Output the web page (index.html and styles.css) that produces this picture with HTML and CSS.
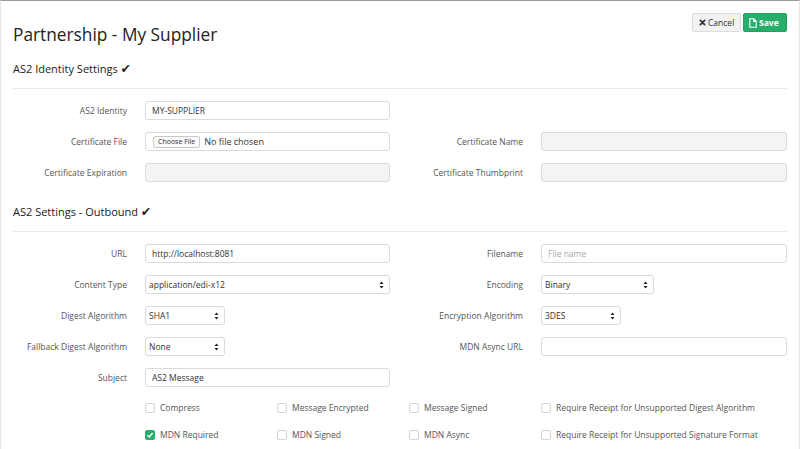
FILE: index.html
```html
<!DOCTYPE html>
<html>
<head>
<meta charset="utf-8">
<title>Partnership - My Supplier</title>
<link rel="stylesheet" href="styles.css">
</head>
<body>
<div class="page">
  <header class="header">
    <h1 class="title">Partnership - My Supplier</h1>
    <div class="actions">
      <button class="btn btn-cancel"><svg class="ico" width="7" height="7" viewBox="0 0 10 10"><path d="M2 2 L8 8 M8 2 L2 8" stroke="#333" stroke-width="2.6" stroke-linecap="round"/></svg>Cancel</button>
      <button class="btn btn-save"><svg class="ico" width="8" height="10" viewBox="0 0 8 10"><path d="M0.8 0.8 H4.8 L7.2 3.2 V9.2 H0.8 Z M4.6 0.8 V3.4 H7.2" fill="none" stroke="#fff" stroke-width="1.1" stroke-linejoin="round"/></svg>Save</button>
    </div>
  </header>

  <h2 class="section-title">AS2 Identity Settings <span class="check">✔</span></h2>
  <hr class="rule">
  <div class="form-grid">
    <label class="lbl">AS2 Identity</label>
    <div class="field"><input class="ctl" type="text" value="MY-SUPPLIER"></div>
    <div></div><div></div>

    <label class="lbl">Certificate File</label>
    <div class="field"><div class="ctl file"><span class="file-btn">Choose File</span><span>No file chosen</span></div></div>
    <label class="lbl">Certificate Name</label>
    <div class="field"><input class="ctl disabled" type="text" disabled></div>

    <label class="lbl">Certificate Expiration</label>
    <div class="field"><input class="ctl disabled" type="text" disabled></div>
    <label class="lbl">Certificate Thumbprint</label>
    <div class="field"><input class="ctl disabled" type="text" disabled></div>
  </div>

  <h2 class="section-title second">AS2 Settings - Outbound <span class="check">✔</span></h2>
  <hr class="rule">
  <div class="form-grid">
    <label class="lbl">URL</label>
    <div class="field"><input class="ctl" type="text" value="http://localhost:8081"></div>
    <label class="lbl">Filename</label>
    <div class="field"><input class="ctl" type="text" placeholder="File name"></div>

    <label class="lbl">Content Type</label>
    <div class="field"><div class="ctl select w-full">application/edi-x12<svg class="arrows" width="5" height="8" viewBox="0 0 5 8"><path d="M2.5 0.5 L4.5 3 H0.5 Z M2.5 7.5 L4.5 5 H0.5 Z" fill="#222"/></svg></div></div>
    <label class="lbl">Encoding</label>
    <div class="field"><div class="ctl select w-enc">Binary<svg class="arrows" width="5" height="8" viewBox="0 0 5 8"><path d="M2.5 0.5 L4.5 3 H0.5 Z M2.5 7.5 L4.5 5 H0.5 Z" fill="#222"/></svg></div></div>

    <label class="lbl">Digest Algorithm</label>
    <div class="field"><div class="ctl select w-sm">SHA1<svg class="arrows" width="5" height="8" viewBox="0 0 5 8"><path d="M2.5 0.5 L4.5 3 H0.5 Z M2.5 7.5 L4.5 5 H0.5 Z" fill="#222"/></svg></div></div>
    <label class="lbl">Encryption Algorithm</label>
    <div class="field"><div class="ctl select w-sm">3DES<svg class="arrows" width="5" height="8" viewBox="0 0 5 8"><path d="M2.5 0.5 L4.5 3 H0.5 Z M2.5 7.5 L4.5 5 H0.5 Z" fill="#222"/></svg></div></div>

    <label class="lbl">Fallback Digest Algorithm</label>
    <div class="field"><div class="ctl select w-sm">None<svg class="arrows" width="5" height="8" viewBox="0 0 5 8"><path d="M2.5 0.5 L4.5 3 H0.5 Z M2.5 7.5 L4.5 5 H0.5 Z" fill="#222"/></svg></div></div>
    <label class="lbl">MDN Async URL</label>
    <div class="field"><input class="ctl" type="text"></div>

    <label class="lbl">Subject</label>
    <div class="field"><input class="ctl" type="text" value="AS2 Message"></div>
    <div></div><div></div>
  </div>

  <div class="checks">
    <div class="chk"><span class="box"></span>Compress</div>
    <div class="chk"><span class="box"></span>Message Encrypted</div>
    <div class="chk"><span class="box"></span>Message Signed</div>
    <div class="chk"><span class="box"></span>Require Receipt for Unsupported Digest Algorithm</div>
    <div class="chk"><span class="box on"><svg width="8" height="8" viewBox="0 0 8 8"><path d="M1.5 4.2 L3.3 6 L6.6 2" fill="none" stroke="#fff" stroke-width="1.5"/></svg></span>MDN Required</div>
    <div class="chk"><span class="box"></span>MDN Signed</div>
    <div class="chk"><span class="box"></span>MDN Async</div>
    <div class="chk"><span class="box"></span>Require Receipt for Unsupported Signature Format</div>
  </div>
</div>
</body>
</html>
```
FILE: styles.css
```css
* { box-sizing: border-box; }
html, body { margin: 0; padding: 0; background: #fff; }
body {
  font-family: "Open Sans", "Liberation Sans", sans-serif;
  color: #333;
  height: 449px;
  overflow: hidden;
  border-top: 1px solid #9a9a9a;
  border-left: 1px solid #e6e6e6;
  border-right: 1px solid #e6e6e6;
}
.page { padding: 12px 12px 0 12px; }
.header { display: flex; justify-content: space-between; align-items: flex-start; }
.title {
  margin: 10px 0 0 0;
  font-size: 17.3px;
  line-height: 23px;
  font-weight: 400;
  color: #222;
}
.actions { display: flex; gap: 2px; }
.btn {
  height: 19px;
  font-family: "Open Sans", "Liberation Sans", sans-serif;
  font-size: 8.5px;
  border-radius: 2px;
  padding: 0 6px;
  display: flex;
  align-items: center;
  gap: 2px;
  cursor: pointer;
}
.btn-cancel { width: 49px; background: #f2f2f2; border: 1px solid #dcdcdc; color: #333; }
.btn-save { width: 44px; background: #28ae6b; border: 1px solid #23a062; color: #fff; font-weight: 700; padding-left: 5px; }
.ico { flex: none; }
.section-title {
  margin: 15px 0 0 0;
  font-size: 11px;
  line-height: 16px;
  font-weight: 400;
  color: #222;
}
.section-title.second { margin-top: 22px; }
.check { font-family: "DejaVu Sans", sans-serif; font-size: 12.5px; line-height: 1; }
.rule { margin: 11px 0 0 0; border: 0; border-top: 1px solid #e8e8e8; height: 0; }
.form-grid {
  margin-top: 12px;
  display: grid;
  grid-template-columns: 114px 245px 115px 246px;
  column-gap: 18px;
  row-gap: 12px;
  grid-auto-rows: 19px;
}
.lbl {
  font-size: 8.5px;
  color: #555;
  text-align: right;
  align-self: center;
  white-space: nowrap;
}
.field { display: flex; }
.ctl {
  width: 100%;
  height: 19px;
  border: 1px solid #dadada;
  border-radius: 3px;
  padding: 0 6px;
  font-family: "Open Sans", "Liberation Sans", sans-serif;
  font-size: 8.5px;
  color: #333;
  background: #fff;
  outline: none;
}
.ctl::placeholder { color: #aaa; }
.ctl.disabled { background: #f4f4f4; }
.file { display: flex; align-items: center; gap: 4px; padding-left: 7px; font-size: 9px; }
.file-btn {
  font-size: 7px;
  border: 1px solid #c8c8c8;
  border-radius: 2px;
  padding: 0 4px;
  line-height: 10px;
  background: #fafafa;
  color: #333;
}
.select { display: flex; align-items: center; justify-content: space-between; padding: 0 5px 0 3px; }
.arrows { flex: none; }
.w-full { width: 245px; }
.w-enc { width: 113px; }
.w-sm { width: 80px; }
.checks {
  margin: 13px 0 0 132px;
  display: grid;
  grid-template-columns: repeat(4, 132px);
  grid-auto-rows: 15px;
  row-gap: 12px;
}
.chk {
  display: flex;
  align-items: center;
  gap: 5px;
  font-size: 8.5px;
  color: #555;
  white-space: nowrap;
}
.box {
  width: 10px;
  height: 10px;
  border: 1px solid #d4d4d4;
  border-radius: 2px;
  background: #fff;
  display: flex;
  align-items: center;
  justify-content: center;
  flex: none;
}
.box.on { background: #28ae6b; border-color: #28ae6b; }
```
